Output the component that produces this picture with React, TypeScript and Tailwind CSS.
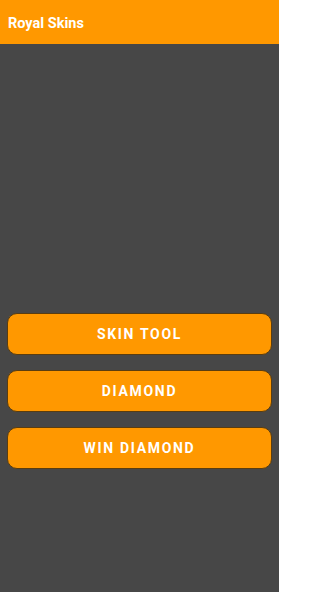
export default function App() {
  const buttons = ["SKIN TOOL", "DIAMOND", "WIN DIAMOND"];

  return (
    <div
      className="flex h-[592px] w-[279px] flex-col bg-[#474747]"
      style={{ fontFamily: "Roboto, 'Liberation Sans', sans-serif" }}
    >
      <header className="flex h-[44px] items-center bg-[#ff9800] px-2 pt-[3px]">
        <h1 className="text-[14.5px] font-bold text-white">Royal Skins</h1>
      </header>

      <div className="flex flex-col gap-[15px] px-[7px] pt-[269px]">
        {buttons.map((label) => (
          <button
            key={label}
            className="h-[42px] w-full rounded-[10px] border border-[#5a3d10] bg-[#ff9800] pt-px text-[14px] font-bold tracking-[0.12em] text-white"
          >
            {label}
          </button>
        ))}
      </div>
    </div>
  );
}
